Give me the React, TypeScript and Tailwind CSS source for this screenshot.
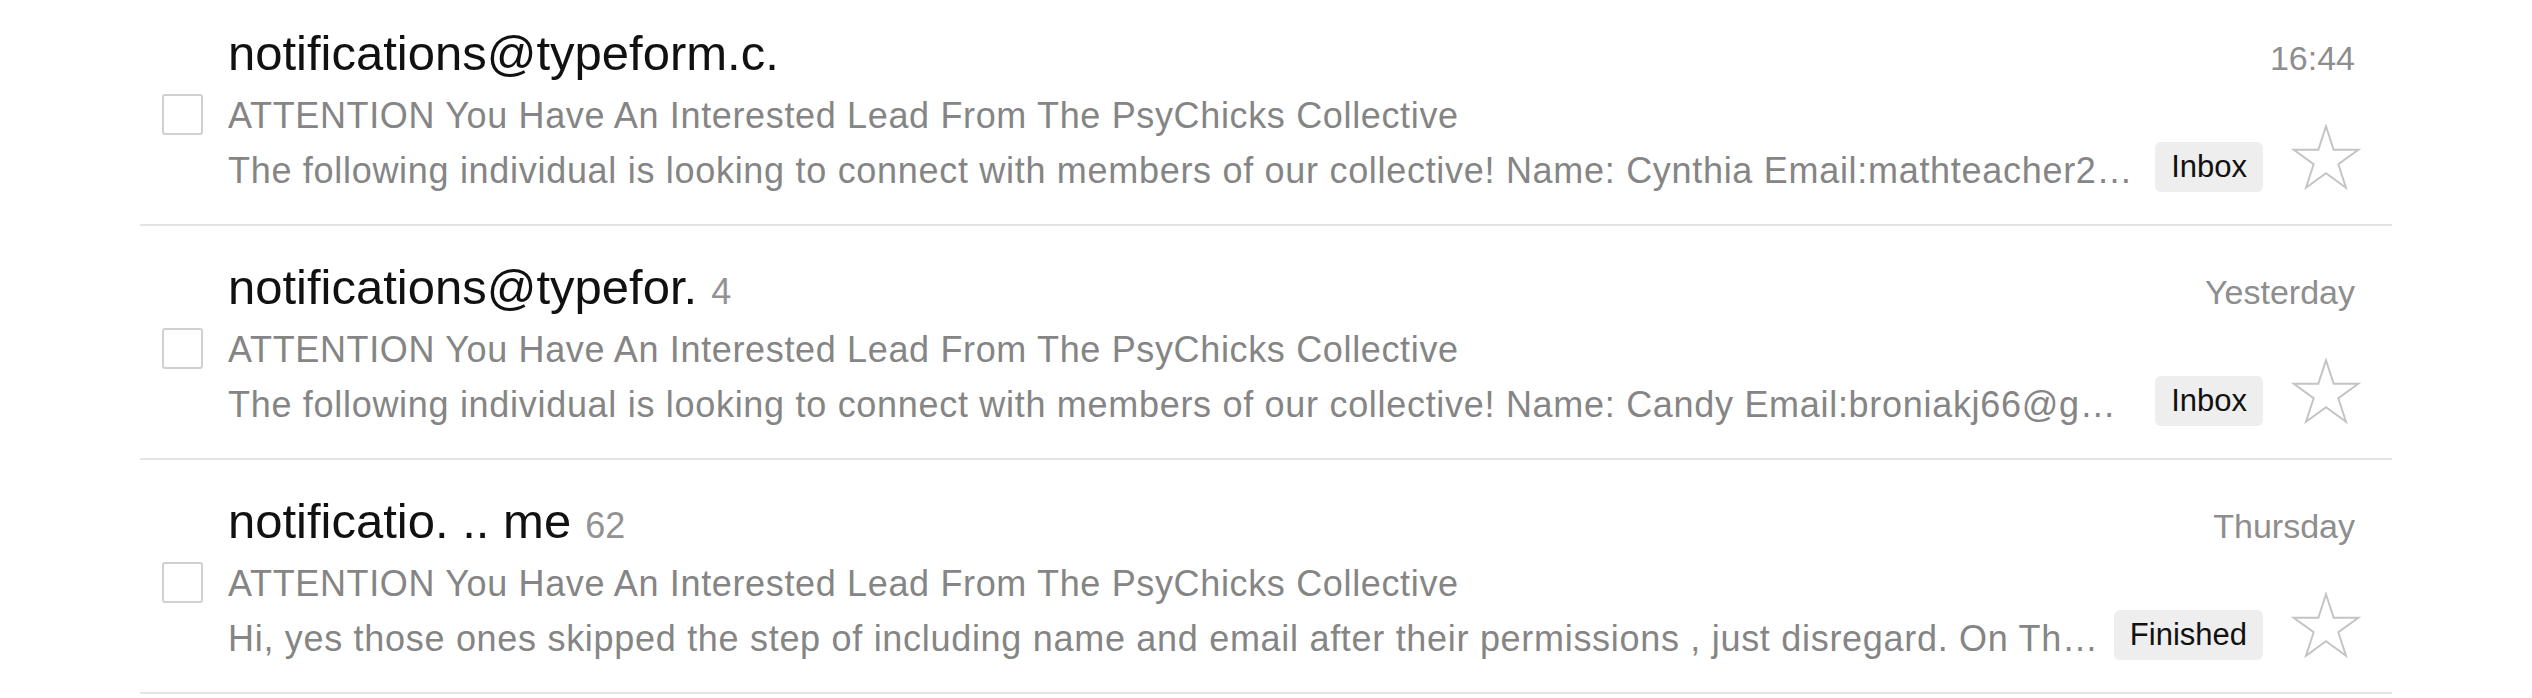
import React from "react";

type Mail = {
  sender: string;
  count?: string;
  time: string;
  subject: string;
  preview: string;
  label: string;
};

const mails: Mail[] = [
  {
    sender: "notifications@typeform.c.",
    time: "16:44",
    subject: "ATTENTION You Have An Interested Lead From The PsyChicks Collective",
    preview:
      "The following individual is looking to connect with members of our collective! Name: Cynthia Email:mathteacher2…",
    label: "Inbox",
  },
  {
    sender: "notifications@typefor.",
    count: "4",
    time: "Yesterday",
    subject: "ATTENTION You Have An Interested Lead From The PsyChicks Collective",
    preview:
      "The following individual is looking to connect with members of our collective! Name: Candy Email:broniakj66@g…",
    label: "Inbox",
  },
  {
    sender: "notificatio. .. me",
    count: "62",
    time: "Thursday",
    subject: "ATTENTION You Have An Interested Lead From The PsyChicks Collective",
    preview:
      "Hi, yes those ones skipped the step of including name and email after their permissions , just disregard. On Th…",
    label: "Finished",
  },
];

function Star() {
  return (
    <svg width="70" height="66" viewBox="-2 -2 70 66" fill="none">
      <polygon
        points="33,0.2 40.64,23.69 65.34,23.69 45.35,38.21 52.98,61.71 33,47.19 13.02,61.71 20.65,38.21 0.66,23.69 25.36,23.69"
        stroke="#c4c4c4"
        strokeWidth="2"
        strokeLinejoin="miter"
      />
    </svg>
  );
}

function Row({ m }: { m: Mail }) {
  return (
    <div className="flex h-[234px] border-b-2 border-[#e3e3e3]">
      <div className="w-[88px] shrink-0 pl-[22px] pt-[102px]">
        <div className="h-[41px] w-[41px] rounded-[3px] border-2 border-[#d0d0d0] bg-white" />
      </div>
      <div className="flex min-w-0 flex-1 flex-col pt-[33px]">
        <div className="flex h-[56px] items-baseline justify-between pr-[37px] leading-[56px]">
          <div className="flex items-baseline">
            <span className="text-[49px] text-[#111111]">{m.sender}</span>
            {m.count && (
              <span className="ml-[14px] text-[36px] text-[#929292]">{m.count}</span>
            )}
          </div>
          <span className="text-[34px] text-[#8e8e8e]">{m.time}</span>
        </div>
        <div className="mt-[7px] flex">
          <div className="flex min-w-0 flex-1 flex-col">
            <div className="h-[55px] overflow-hidden whitespace-nowrap text-[36px] leading-[55px] tracking-[0.65px] text-[#858585]">
              {m.subject}
            </div>
            <div className="flex h-[55px] items-start">
              <div className="min-w-0 flex-1 whitespace-nowrap text-[36px] leading-[55px] tracking-[0.7px] text-[#858585]">
                {m.preview}
              </div>
              <div className="ml-[8px] -mt-px h-[50px] shrink-0 rounded-[6px] bg-[#eeeeee] px-[16px] text-[31px] leading-[50px] text-[#111111]">
                {m.label}
              </div>
            </div>
          </div>
          <div className="shrink-0 pl-[28px] pr-[31px] pt-[36px]">
            <Star />
          </div>
        </div>
      </div>
    </div>
  );
}

export default function App() {
  return (
    <div
      className="min-h-[698px] w-full overflow-hidden bg-white"
      style={{ fontFamily: '"Liberation Sans", Arial, sans-serif' }}
    >
      <div className="mx-[140px] -mt-[8px]">
        {mails.map((m, i) => (
          <Row key={i} m={m} />
        ))}
      </div>
    </div>
  );
}
